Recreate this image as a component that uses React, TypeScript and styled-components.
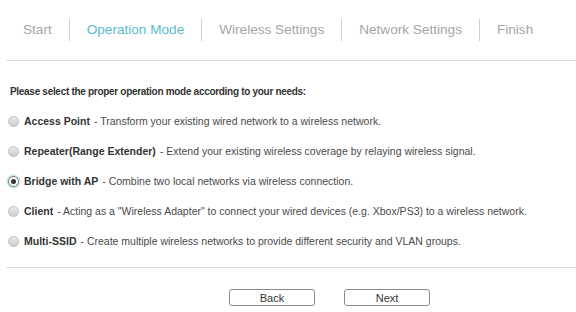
import styled, { createGlobalStyle } from 'styled-components';

const GlobalStyle = createGlobalStyle`
  html, body {
    margin: 0;
    padding: 0;
    background: #fff;
  }
  body {
    font-family: "Liberation Sans", Arial, sans-serif;
  }
`

const Page = styled.div`
  width: 576px;
  height: 312px;
  display: flex;
  flex-direction: column;
  overflow: hidden;
`

const Steps = styled.div`
  display: flex;
  align-items: center;
  height: 60px;
  margin-left: 6px;
  padding-left: 17px;
  border-bottom: 1px solid #dcdcdc;
`

const Step = styled.span<{ $active?: boolean }>`
  font-size: 13.6px;
  color: ${p => (p.$active ? '#5cbccc' : '#a6a6a6')};
  white-space: nowrap;
  margin-top: -2px;
`

const Divider = styled.span`
  width: 1px;
  height: 22px;
  background: #cfcfcf;
  margin: 0 17px;
`

const Body = styled.div`
  height: 181px;
  margin-left: 6px;
  padding: 25px 0 0 4px;
  border-bottom: 1px solid #dcdcdc;
`

const Heading = styled.div`
  font-size: 10px;
  font-weight: bold;
  letter-spacing: -0.3px;
  color: #333;
  margin-bottom: 18px;
`

const Options = styled.div`
  display: flex;
  flex-direction: column;
  gap: 18px;
`

const Option = styled.label`
  display: flex;
  align-items: center;
  font-size: 10.5px;
  color: #4a4a4a;
  height: 12px;
  margin-left: -2px;
`

const Radio = styled.span<{ $checked?: boolean }>`
  position: relative;
  width: 9px;
  height: 9px;
  border-radius: 50%;
  border: 1px solid ${p => (p.$checked ? '#7a7a7a' : '#bdbdbd')};
  background: ${p => (p.$checked ? '#fff' : 'linear-gradient(#ececec, #cdcdcd)')};
  margin-right: 5px;
  flex-shrink: 0;
  box-shadow: ${p => (p.$checked ? '0 0 0 1.5px #c6e6ea' : 'none')};

  &::after {
    content: '';
    display: ${p => (p.$checked ? 'block' : 'none')};
    position: absolute;
    left: 2px;
    top: 2px;
    width: 5px;
    height: 5px;
    border-radius: 50%;
    background: #333;
  }
`

const Name = styled.b`
  color: #333;
  margin-right: 4px;
`

const Footer = styled.div`
  display: flex;
  gap: 29px;
  padding: 21px 0 0 229px;
`

const Button = styled.button`
  width: 86px;
  height: 17px;
  border: 1px solid #8a8a8a;
  border-radius: 3px;
  background: #fff;
  font-family: "Liberation Sans", Arial, sans-serif;
  font-size: 11px;
  color: #333;
  padding: 0;
  cursor: pointer;
`

const modes = [
  { name: 'Access Point', desc: '- Transform your existing wired network to a wireless network.' },
  { name: 'Repeater(Range Extender)', desc: '- Extend your existing wireless coverage by relaying wireless signal.' },
  { name: 'Bridge with AP', desc: '- Combine two local networks via wireless connection.', checked: true },
  { name: 'Client', desc: '- Acting as a "Wireless Adapter" to connect your wired devices (e.g. Xbox/PS3) to a wireless network.' },
  { name: 'Multi-SSID', desc: '- Create multiple wireless networks to provide different security and VLAN groups.' },
]

const steps = ['Start', 'Operation Mode', 'Wireless Settings', 'Network Settings', 'Finish']

const App = () => {
  return (
    <Page>
      <GlobalStyle />
      <Steps>
        {steps.map((s, i) => (
          <span key={s} style={{ display: 'contents' }}>
            {i > 0 && <Divider />}
            <Step $active={s === 'Operation Mode'}>{s}</Step>
          </span>
        ))}
      </Steps>
      <Body>
        <Heading>Please select the proper operation mode according to your needs:</Heading>
        <Options>
          {modes.map(m => (
            <Option key={m.name}>
              <Radio $checked={m.checked} />
              <Name>{m.name}</Name>
              {m.desc}
            </Option>
          ))}
        </Options>
      </Body>
      <Footer>
        <Button>Back</Button>
        <Button>Next</Button>
      </Footer>
    </Page>
  );
}

export default App;
